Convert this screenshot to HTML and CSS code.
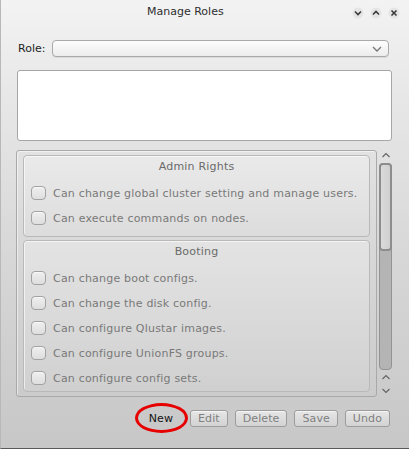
FILE: index.html
```html
<!DOCTYPE html>
<html>
<head>
<meta charset="utf-8">
<link rel="stylesheet" href="styles.css">
</head>
<body>
<div class="window">
  <div class="titlebar">
    <div></div>
    <div class="title">Manage Roles</div>
    <div class="controls">
      <svg class="ctl" width="12" height="12" viewBox="0 0 12 12"><circle cx="6" cy="6" r="5.5" fill="#000" fill-opacity="0.05"/><path d="M3 4.5 L6 7.5 L9 4.5" fill="none" stroke="#3a3a3a" stroke-width="1.6"/></svg>
      <svg class="ctl" width="12" height="12" viewBox="0 0 12 12"><circle cx="6" cy="6" r="5.5" fill="#000" fill-opacity="0.05"/><path d="M3 7.5 L6 4.5 L9 7.5" fill="none" stroke="#3a3a3a" stroke-width="1.6"/></svg>
      <svg class="ctl" width="12" height="12" viewBox="0 0 12 12"><circle cx="6" cy="6" r="5.5" fill="#000" fill-opacity="0.05"/><path d="M3.5 3.5 L8.5 8.5 M8.5 3.5 L3.5 8.5" fill="none" stroke="#3a3a3a" stroke-width="1.6"/></svg>
    </div>
  </div>
  <div class="content">
    <div class="role-row">
      <span class="role-label">Role:</span>
      <div class="combo">
        <svg width="10" height="6" viewBox="0 0 10 6"><path d="M1 1 L5 5 L9 1" fill="none" stroke="#777" stroke-width="1.3"/></svg>
      </div>
    </div>
    <div class="textarea"></div>
    <div class="scroll-row">
      <div class="frame">
        <div class="group">
          <div class="group-title">Admin Rights</div>
          <div class="row"><span class="cb"></span><span class="lbl">Can change global cluster setting and manage users.</span></div>
          <div class="row"><span class="cb"></span><span class="lbl">Can execute commands on nodes.</span></div>
        </div>
        <div class="group group-last">
          <div class="group-title">Booting</div>
          <div class="row"><span class="cb"></span><span class="lbl">Can change boot configs.</span></div>
          <div class="row"><span class="cb"></span><span class="lbl">Can change the disk config.</span></div>
          <div class="row"><span class="cb"></span><span class="lbl">Can configure Qlustar images.</span></div>
          <div class="row"><span class="cb"></span><span class="lbl">Can configure UnionFS groups.</span></div>
          <div class="row"><span class="cb"></span><span class="lbl">Can configure config sets.</span></div>
        </div>
      </div>
      <div class="scrollbar">
        <svg class="arrow top-arrow" width="12" height="8" viewBox="0 0 12 8"><path d="M2.5 6 L6 2.5 L9.5 6" fill="none" stroke="#666" stroke-width="1.2"/></svg>
        <div class="track">
          <div class="handle"></div>
        </div>
        <svg class="arrow" width="12" height="8" viewBox="0 0 12 8"><path d="M2.5 6 L6 2.5 L9.5 6" fill="none" stroke="#666" stroke-width="1.2"/></svg>
        <svg class="arrow" width="12" height="8" viewBox="0 0 12 8"><path d="M2.5 2 L6 5.5 L9.5 2" fill="none" stroke="#666" stroke-width="1.2"/></svg>
      </div>
    </div>
    <div class="buttons">
      <div class="btn btn-new">New<span class="ring"></span></div>
      <div class="btn">Edit</div>
      <div class="btn">Delete</div>
      <div class="btn">Save</div>
      <div class="btn">Undo</div>
    </div>
  </div>
</div>
</body>
</html>
```

FILE: styles.css
```css
* { box-sizing: border-box; }
html, body { margin: 0; padding: 0; }
body {
  width: 409px;
  height: 449px;
  overflow: hidden;
  font-family: "DejaVu Sans", "Liberation Sans", sans-serif;
  font-size: 11px;
  letter-spacing: 0.2px;
}
.window {
  width: 409px;
  height: 449px;
  background: linear-gradient(to bottom, #f3f3f3 0%, #e8e8e8 20%, #d6d6d6 60%, #c7c7c7 100%);
  border-left: 1px solid #b8b8b8;
  border-bottom: 1px solid #5a5a5a;
  display: flex;
  flex-direction: column;
}
.titlebar {
  height: 24px;
  display: grid;
  grid-template-columns: 146px auto 1fr;
  align-items: center;
}
.title {
  color: #2e2e2e;
  font-size: 11px;
  line-height: 24px;
  letter-spacing: 0;
}
.controls {
  display: flex;
  justify-content: flex-end;
  gap: 6px;
  padding-right: 9px;
  padding-top: 1px;
}
.ctl { display: block; }
.content {
  padding: 0 17px 0 15px;
  display: flex;
  flex-direction: column;
}
.role-row {
  margin-top: 16px;
  height: 17px;
  display: flex;
  align-items: center;
  padding-left: 2px;
  padding-right: 3px;
}
.role-label {
  color: #1e1e1e;
  width: 34px;
  letter-spacing: 0;
}
.combo {
  flex: 1;
  height: 17px;
  border: 1px solid #a9a9a9;
  border-radius: 4px;
  background: linear-gradient(to bottom, #fdfdfd, #ececec);
  box-shadow: 0 1px 0 rgba(0,0,0,0.08);
  display: flex;
  align-items: center;
  justify-content: flex-end;
  padding-right: 6px;
}
.combo svg { display: block; }
.textarea {
  margin-top: 13px;
  height: 71px;
  background: #fff;
  border: 1px solid #a6a6a6;
  border-radius: 3px;
  margin-left: 1px;
}
.scroll-row {
  margin-top: 9px;
  height: 247px;
  display: flex;
  gap: 2px;
}
.frame {
  width: 361px;
  height: 247px;
  border: 1px solid #a9a9a9;
  border-radius: 3px;
  padding: 4px 6px 2px 6px;
  overflow: hidden;
  box-shadow: inset 1px 1px 0 rgba(255,255,255,0.5);
}
.group {
  border: 1px solid #b9b9b9;
  border-radius: 4px;
  box-shadow: inset 1px 1px 0 rgba(255,255,255,0.6);
  background: linear-gradient(to bottom, rgba(255,255,255,0.28), rgba(255,255,255,0.08));
  padding-bottom: 6px;
  margin-bottom: 3px;
}
.group-last { padding-bottom: 1px; margin-bottom: 0; }
.group-title {
  height: 24px;
  line-height: 22px;
  text-align: center;
  color: #6a6a6a;
}
.row {
  height: 25px;
  display: flex;
  align-items: center;
  padding-left: 7px;
  gap: 7px;
  padding-top: 1px;
}
.cb {
  width: 15px;
  height: 14px;
  border: 1px solid #a2a2a2;
  border-radius: 4px;
  background: linear-gradient(to bottom, #efefef, #dedede);
  box-shadow: inset 0 1px 0 rgba(255,255,255,0.6);
  flex: none;
  margin-top: -1px;
}
.lbl {
  color: #797979;
  white-space: nowrap;
}
.scrollbar {
  width: 13px;
  display: flex;
  flex-direction: column;
  align-items: center;
}
.arrow { display: block; flex: none; }
.top-arrow { margin-top: 1px; }
.track {
  flex: 1;
  width: 13px;
  margin: 4px 0 3px 0;
  border: 1px solid #939393;
  border-radius: 4px;
  background: #b4b4b4;
  display: flex;
  flex-direction: column;
}
.handle {
  height: 88px;
  margin: -1px -1px 0 -1px;
  border: 2px solid #8d8d8d;
  border-radius: 4px;
  background: linear-gradient(to right, #dadada, #d0d0d0);
}
.arrow + .arrow { margin-top: 6px; margin-bottom: 2px; }
.buttons {
  margin-top: 13px;
  display: flex;
  justify-content: flex-end;
  gap: 7px;
  padding-right: 2px;
}
.btn {
  position: relative;
  height: 17px;
  line-height: 15px;
  padding: 0 7px;
  border: 1px solid #9c9c9c;
  border-radius: 3px;
  background: linear-gradient(to bottom, #e6e6e6, #d3d3d3);
  box-shadow: inset 0 1px 0 rgba(255,255,255,0.6);
  color: #808080;
  letter-spacing: 0.1px;
}
.btn-new {
  color: #141414;
  border-color: transparent;
  background: transparent;
  box-shadow: none;
  padding: 0 9px;
}
.ring {
  position: absolute;
  left: -5px;
  right: -6px;
  top: -8px;
  bottom: -7px;
  border: 3.5px solid #e60000;
  border-radius: 50%;
}
```
